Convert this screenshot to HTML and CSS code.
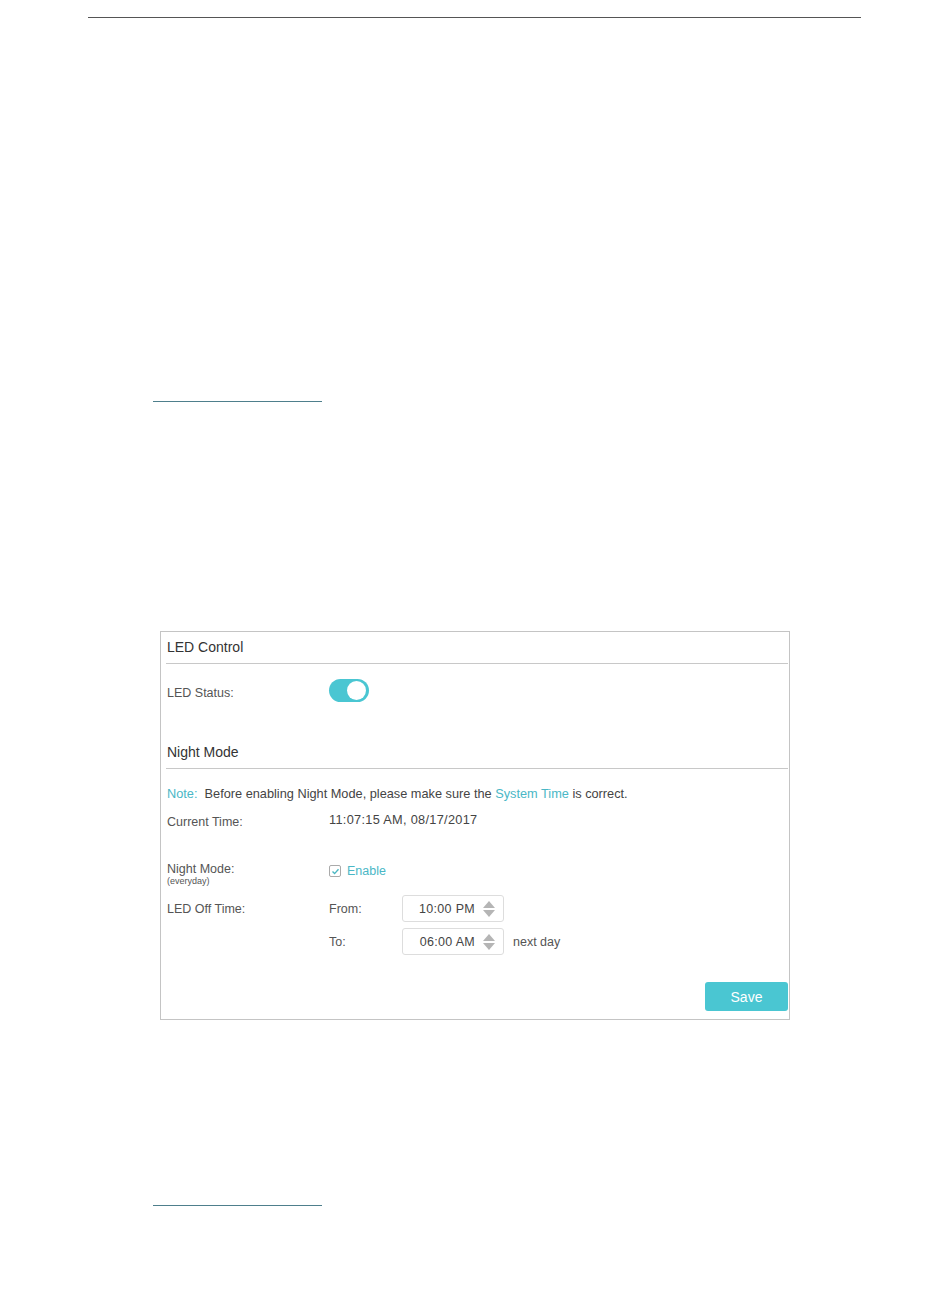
FILE: index.html
```html
<!DOCTYPE html>
<html>
<head>
<meta charset="utf-8">
<link rel="stylesheet" href="styles.css">
</head>
<body>
<div class="page">
  <div class="top-rule"></div>
  <div class="foot-rule first"></div>
  <div class="figure">
    <div class="sec-title">LED Control</div>
    <div class="row status-row">
      <div class="label">LED Status:</div>
      <div class="toggle"><span class="knob"></span></div>
    </div>
    <div class="sec-title night-title">Night Mode</div>
    <div class="note"><span class="teal">Note:</span>&nbsp; Before enabling Night Mode, please make sure the <span class="teal">System Time</span> is correct.</div>
    <div class="row time-row">
      <div class="label">Current Time:</div>
      <div class="value">11:07:15 AM, 08/17/2017</div>
    </div>
    <div class="row mode-row">
      <div class="label">Night Mode:<span class="sub">(everyday)</span></div>
      <div class="check">
        <span class="box"><svg width="9" height="9" viewBox="0 0 9 9"><path d="M1.5 4.6 L3.6 6.6 L7.5 2.3" fill="none" stroke="#4ab7c2" stroke-width="1.4"/></svg></span>
        <span class="teal">Enable</span>
      </div>
    </div>
    <div class="row off-row">
      <div class="label">LED Off Time:</div>
      <div class="sub-label">From:</div>
      <div class="timebox"><span class="tval">10:00 PM</span><span class="spin"><i class="up"></i><i class="down"></i></span></div>
    </div>
    <div class="row to-row">
      <div class="label"></div>
      <div class="sub-label">To:</div>
      <div class="timebox"><span class="tval">06:00 AM</span><span class="spin"><i class="up"></i><i class="down"></i></span></div>
      <div class="after">next day</div>
    </div>
    <div class="actions"><button class="save">Save</button></div>
  </div>
  <div class="foot-rule second"></div>
</div>
</body>
</html>
```
FILE: styles.css
```css
html, body {
  margin: 0;
  padding: 0;
  background: #fff;
}
.page {
  width: 950px;
  height: 1297px;
  font-family: "Liberation Sans", Arial, sans-serif;
  color: #444;
  overflow: hidden;
}
.top-rule {
  margin: 17px 0 0 88px;
  width: 773px;
  height: 1px;
  background: #555;
}
.foot-rule {
  margin-left: 153px;
  width: 169px;
  height: 1px;
  background: #4e7f8c;
}
.foot-rule.first {
  margin-top: 383px;
}
.foot-rule.second {
  margin-top: 185px;
}
.figure {
  margin: 229px 0 0 160px;
  height: 387px;
  border: 1px solid #c4c4c4;
  padding: 0 1px 0 5px;
  box-sizing: content-box;
  width: 622px;
}
.sec-title {
  height: 31px;
  line-height: 31px;
  font-size: 14px;
  color: #333;
  padding-left: 1px;
  border-bottom: 1px solid #c8c8c8;
}
.row {
  display: flex;
  align-items: center;
  font-size: 12.5px;
}
.label {
  width: 162px;
  padding-left: 1px;
  color: #555;
  flex: none;
}
.status-row {
  margin-top: 15px;
  height: 23px;
}
.status-row .label {
  padding-top: 4px;
}
.toggle {
  width: 40px;
  height: 23px;
  border-radius: 12px;
  background: #4ac6d2;
  position: relative;
}
.knob {
  position: absolute;
  right: 3px;
  top: 2px;
  width: 19px;
  height: 19px;
  border-radius: 50%;
  background: #fff;
}
.night-title {
  margin-top: 35px;
}
.note {
  margin-top: 17px;
  font-size: 12.75px;
  line-height: 16px;
  color: #444;
  padding-left: 1px;
}
.teal {
  color: #4ab7c6;
}
.time-row {
  margin-top: 7px;
  height: 20px;
}
.time-row .label {
  padding-top: 5px;
}
.value {
  font-size: 12.75px;
  color: #444;
  letter-spacing: 0.3px;
}
.mode-row {
  margin-top: 33px;
  align-items: flex-start;
  height: 28px;
}
.mode-row .label {
  line-height: 15px;
}
.sub {
  display: block;
  font-size: 9px;
  line-height: 9px;
  color: #555;
}
.check {
  display: flex;
  align-items: center;
  gap: 6px;
  padding-top: 2px;
}
.box {
  width: 10px;
  height: 10px;
  border: 1px solid #aaa;
  border-radius: 2px;
  display: flex;
  align-items: center;
  justify-content: center;
}
.off-row {
  margin-top: 5px;
  height: 27px;
}
.to-row {
  margin-top: 6px;
  height: 27px;
}
.sub-label {
  width: 73px;
  color: #555;
}
.timebox {
  border: 1px solid #ddd;
  border-radius: 3px;
  display: flex;
  align-items: center;
  justify-content: flex-end;
  padding-right: 8px;
  box-sizing: border-box;
  width: 102px;
  height: 27px;
  font-size: 12.5px;
  color: #444;
}
.tval {
  letter-spacing: 0.3px;
  margin-right: 8px;
}
.spin {
  display: flex;
  flex-direction: column;
  gap: 2px;
}
.spin i {
  display: block;
  width: 0;
  height: 0;
  border-left: 6px solid transparent;
  border-right: 6px solid transparent;
}
.spin .up {
  border-bottom: 7px solid #b5b5b5;
}
.spin .down {
  border-top: 7px solid #b5b5b5;
}
.after {
  margin-left: 9px;
  color: #555;
}
.actions {
  display: flex;
  justify-content: flex-end;
  margin-top: 27px;
}
.save {
  width: 83px;
  height: 29px;
  border: none;
  border-radius: 3px;
  background: #4ac6d2;
  color: #fff;
  font-family: "Liberation Sans", Arial, sans-serif;
  font-size: 14px;
  padding: 0;
}
```
